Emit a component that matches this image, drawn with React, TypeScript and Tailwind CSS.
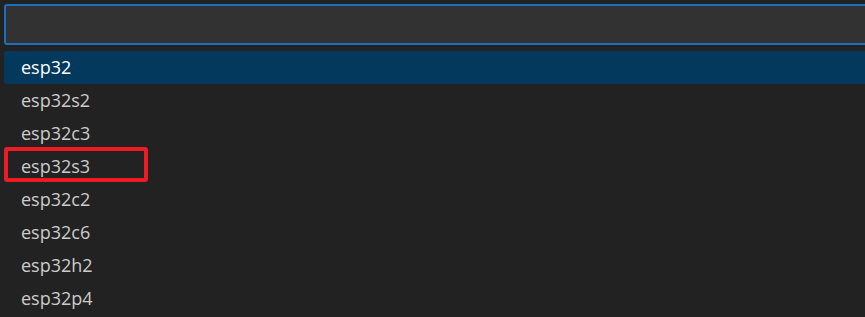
const items = ["esp32", "esp32s2", "esp32c3", "esp32s3", "esp32c2", "esp32c6", "esp32h2", "esp32p4"];

export default function App() {
  return (
    <div className="w-[865px] h-[317px] overflow-hidden bg-[#222222] pl-[4px] pt-[4px] font-['Open_Sans',sans-serif]">
      <div className="w-[880px] h-[41px] rounded-l-[3px] border-2 border-[#1a6fc0] bg-[#323232]" />
      <ul className="mt-[6px] w-[880px]">
        {items.map((name, i) => (
          <li
            key={name}
            className={`relative h-[33px] flex items-center pl-[17px] text-[18px] ${
              i === 0 ? "bg-[#04395e] text-white rounded-l-[3px]" : "text-[#cccccc]"
            }`}
          >
            {name}
            {name === "esp32s3" && (
              <span className="absolute left-[0px] top-[-3px] w-[144px] h-[35px] border-[4px] border-[#ec1c24] rounded-[3px]" />
            )}
          </li>
        ))}
      </ul>
    </div>
  );
}
